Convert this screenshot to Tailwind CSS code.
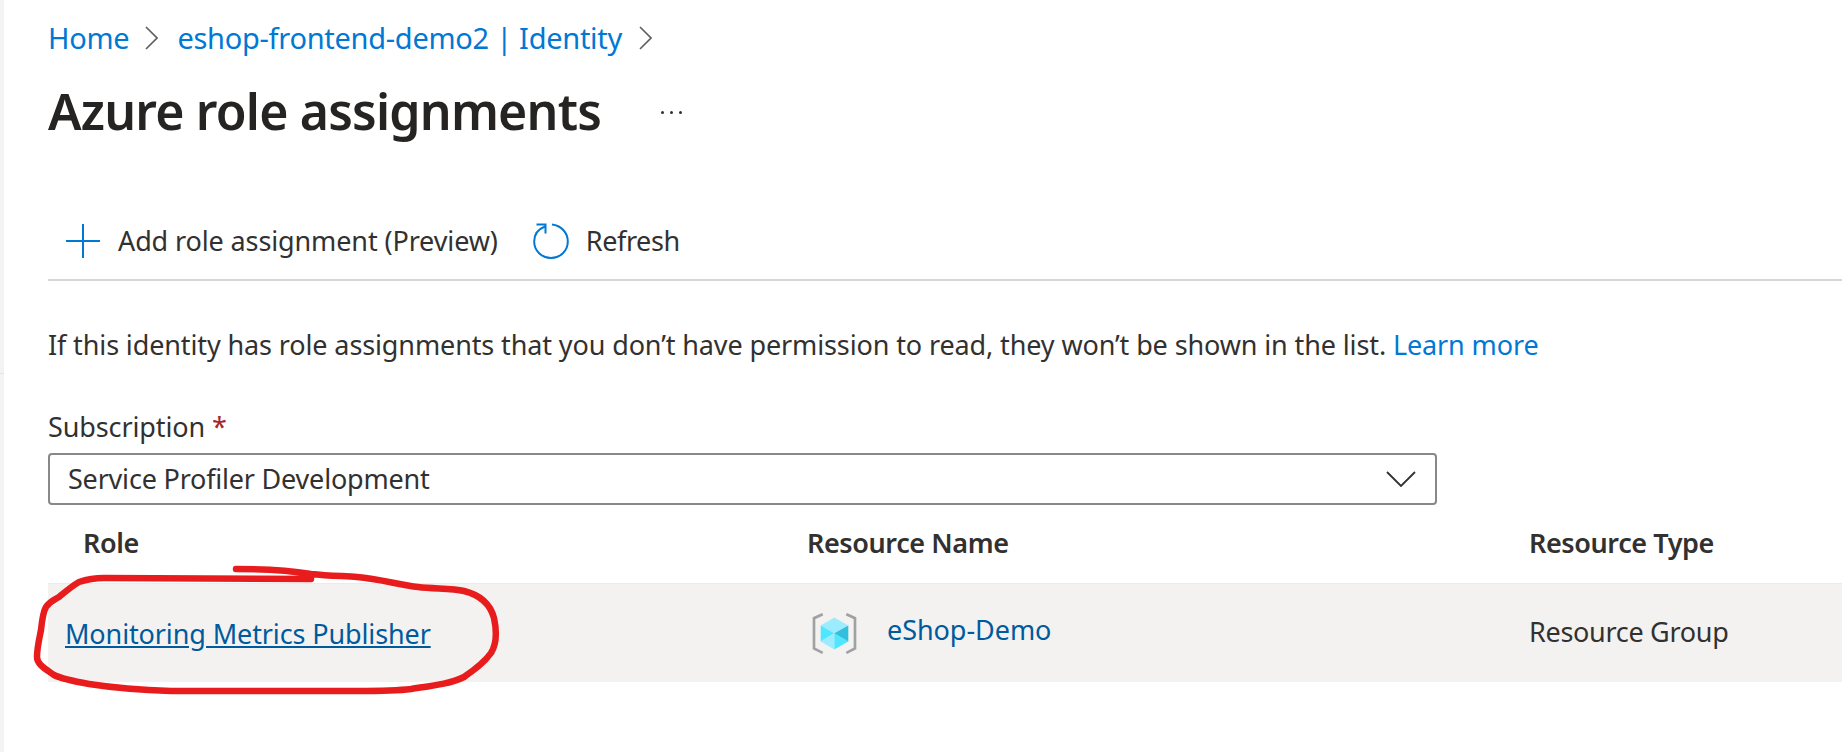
<!DOCTYPE html>
<html lang="en">
<head>
    <meta charset="UTF-8">
    <title>Azure role assignments</title>
    <script src="https://cdn.jsdelivr.net/npm/@tailwindcss/browser@4"></script>
</head>
<body class="bg-white font-['Noto_Sans',sans-serif] text-[#323130] overflow-hidden">
<div class="relative flex h-[752px] w-[1842px]">
    <!-- left gutter -->
    <div class="w-[4px] shrink-0 bg-[#f3f3f3] pt-[373px]">
        <div class="h-[1px] bg-[#e4e4e4]"></div>
    </div>

    <main class="flex-1 min-w-0 pl-[44px]">
        <!-- Breadcrumb -->
        <nav class="flex items-center h-[40px] mt-[18px] text-[29px] tracking-[-0.28px] text-[#0078d4]">
            <a>Home</a>
            <svg class="ml-[16px] mr-[19px]" width="13" height="24" viewBox="0 0 13 24" fill="none" stroke="#605e5c" stroke-width="1.6"><path d="M1 1l11 11L1 23"/></svg>
            <a>eshop-frontend-demo2 | Identity</a>
            <svg class="ml-[17px]" width="13" height="24" viewBox="0 0 13 24" fill="none" stroke="#605e5c" stroke-width="1.6"><path d="M1 1l11 11L1 23"/></svg>
        </nav>

        <!-- Title -->
        <div class="flex items-center h-[70px] mt-[18px]">
            <h1 class="text-[50px] font-semibold tracking-[-0.8px] text-[#252423] leading-none">Azure role assignments</h1>
            <span class="flex gap-[6px] ml-[60px] mt-[2px]">
                <i class="block w-[3px] h-[3px] rounded-full bg-[#323130]"></i>
                <i class="block w-[3px] h-[3px] rounded-full bg-[#323130]"></i>
                <i class="block w-[3px] h-[3px] rounded-full bg-[#323130]"></i>
            </span>
        </div>

        <!-- Toolbar -->
        <div class="flex items-center h-[82px] mt-[53px] pt-[4px] pl-[18px] border-b-2 border-[#d6d6d6] text-[27px] tracking-[-0.12px]">
            <svg width="34" height="34" viewBox="0 0 34 34" stroke="#0078d4" stroke-width="2"><path d="M17 0v34M0 17h34"/></svg>
            <span class="ml-[18px]">Add role assignment (Preview)</span>
            <svg class="ml-[35px]" width="36" height="36" viewBox="0 0 36 36" fill="none" stroke="#0078d4" stroke-width="2"><path d="M12 3.500C5.500 6 1.200 11.500 1.200 18.500C1.200 27.800 8.700 35 18 35C27.300 35 34.800 27.800 34.800 18.500C34.800 9.500 28 2.500 19 1.500"/><path d="M3.500 1.500H12.500V10.500"/></svg>
            <span class="ml-[17px] tracking-[-0.4px]">Refresh</span>
        </div>

        <!-- Notice -->
        <p class="mt-[46px] h-[36px] leading-[36px] text-[27px] tracking-[-0.12px] whitespace-nowrap">If this identity has role assignments that you don’t have permission to read, they won’t be shown in the list. <a class="text-[#0078d4]">Learn more</a></p>

        <!-- Subscription -->
        <label class="block mt-[46px] h-[36px] leading-[36px] text-[27px] tracking-[-0.12px]">Subscription <span class="text-[#a4262c]">*</span></label>
        <div class="flex items-center justify-between w-[1389px] h-[52px] mt-[8px] pl-[18px] pr-[19px] border-2 border-[#8a8886] rounded-[4px] text-[27px] tracking-[-0.2px]">
            <span>Service Profiler Development</span>
            <svg width="30" height="16" viewBox="0 0 30 16" fill="none" stroke="#323130" stroke-width="1.800"><path d="M1 1l14 14L29 1"/></svg>
        </div>

        <!-- Table -->
        <div class="grid grid-cols-[759px_722px_1fr] h-[78px] pb-[2px] items-center text-[27px] font-semibold tracking-[-0.4px]">
            <span class="pl-[35px]">Role</span>
            <span>Resource Name</span>
            <span>Resource Type</span>
        </div>
        <div class="grid grid-cols-[759px_722px_1fr] h-[99px] items-center bg-[#f3f2f1] border-t border-[#edebe9] text-[27px] tracking-[-0.12px]">
            <a class="pl-[17px] pt-[3px] text-[#005a9e] underline">Monitoring Metrics Publisher</a>
            <div class="flex items-center pl-[5px]">
                <svg width="45" height="41" viewBox="155 95 135 122" fill="none">
                    <path d="M187 98L161 110V201L187 214M258 98L284 110V201L258 214" stroke="#a0a1a2" stroke-width="8"/>
                    <path d="M222 108L264 132L222 155L181 132Z" fill="#9cebff"/>
                    <path d="M181 132L222 155L181 180Z" fill="#50e6ff"/>
                    <path d="M181 180L222 155V204Z" fill="#9cebff"/>
                    <path d="M222 155L264 180L222 204Z" fill="#50e6ff"/>
                    <path d="M264 132V180L222 155Z" fill="#32bedd"/>
                </svg>
                <span class="ml-[30px] -mt-[5px] tracking-[-0.05px] text-[#005a9e]">eShop-Demo</span>
            </div>
            <span class="-mt-[1px] tracking-[-0.3px]">Resource Group</span>
        </div>
    </main>

    <!-- red pen annotation -->
    <svg class="absolute left-0 top-0 pointer-events-none" width="560" height="720" fill="none" stroke="#e81c1c" stroke-width="6.500" stroke-linecap="round" stroke-linejoin="round">
        <path d="M236 569C260 569 286 570 311 574C330 576 345 576 357 577C380 579 400 585 418 587C435 589 452 588 464 591C480 595 490 603 494 618C497 632 496 645 491 653C484 663 474 670 464 677C450 684 430 686 411 689C395 691 375 691 357 691L171 691C140 690 115 688 89 684C72 681 62 679 54 675C44 668 37 664 37 657C37 648 39 640 41 630C42 620 43 612 46 607C50 601 54 600 59 597C65 592 72 586 79 582C88 579 95 578 104 578L311 579"/>
    </svg>
</div>
</body>
</html>
